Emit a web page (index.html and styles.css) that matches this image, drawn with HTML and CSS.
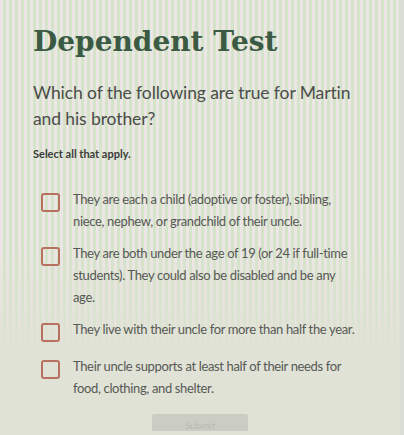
FILE: index.html
```html
<!DOCTYPE html>
<html lang="en">
<head>
  <meta charset="UTF-8">
  <meta name="viewport" content="width=device-width, initial-scale=1.0">
  <title>Dependent Test</title>
  <link rel="stylesheet" href="styles.css">
</head>
<body>
  <div class="quiz">
    <h1 class="quiz-title">Dependent Test</h1>
    <p class="quiz-question">Which of the following are true for Martin and his brother?</p>
    <p class="quiz-hint">Select all that apply.</p>
    <ul class="options">
      <li class="option"><span class="box"></span><span class="option-text">They are each a child (adoptive or foster), sibling, niece, nephew, or grandchild of their uncle.</span></li>
      <li class="option"><span class="box"></span><span class="option-text">They are both under the age of 19 (or 24 if full-time students). They could also be disabled and be any age.</span></li>
      <li class="option"><span class="box"></span><span class="option-text">They live with their uncle for more than half the year.</span></li>
      <li class="option option-last"><span class="box"></span><span class="option-text">Their uncle supports at least half of their needs for food, clothing, and shelter.</span></li>
    </ul>
    <div class="submit-row">
      <button class="submit-btn">Submit</button>
    </div>
  </div>
</body>
</html>
```

FILE: styles.css
```css
body {
  margin: 0;
  height: 435px;
  overflow: hidden;
  font-family: 'Lato', 'Noto Sans', sans-serif;
  background:
    linear-gradient(180deg, rgba(224,226,214,0) 0%, rgba(224,226,214,0) 55%, rgba(224,226,214,0.9) 80%, #e0e2d6 100%),
    repeating-linear-gradient(90deg, #ece6e4 0px, #ece6e4 3px, #d4e3c9 3px, #d4e3c9 6px);
  border-right: 4px solid #d9ddd6;
  box-sizing: border-box;
}
.quiz {
  padding: 20px 33px 0 33px;
}
.quiz-title {
  font-family: 'DejaVu Serif', serif;
  font-weight: bold;
  font-size: 28px;
  color: #3b5a43;
  margin: 0 0 16px 0;
  line-height: 44px;
}
.quiz-question {
  font-size: 17.5px;
  color: #4b4d4a;
  line-height: 26px;
  margin: 0 0 15px 0;
  letter-spacing: -0.1px;
}
.quiz-hint {
  font-size: 11px;
  font-weight: bold;
  color: #3a3c3a;
  margin: 0 0 31px 0;
}
.options {
  list-style: none;
  margin: 0;
  padding: 0 0 0 8px;
  display: flex;
  flex-direction: column;
  gap: 13px;
}
.option {
  display: flex;
  align-items: flex-start;
  gap: 13px;
}
.option-last {
  margin-top: 3px;
}
.box {
  flex: none;
  width: 15px;
  height: 15px;
  border: 2px solid #b8705f;
  border-radius: 3px;
  margin-top: 2px;
}
.option-text {
  max-width: 286px;
  font-size: 13px;
  line-height: 22px;
  color: #575955;
  margin-top: -3px;
  letter-spacing: -0.35px;
}
.submit-row {
  display: flex;
  justify-content: center;
  margin-top: 15px;
}
.submit-btn {
  width: 96px;
  height: 17px;
  border: none;
  border-radius: 2px 2px 0 0;
  background: #cbcdc4;
  color: #b9bbb3;
  font-family: 'Lato', sans-serif;
  font-size: 10px;
  line-height: 12px;
  padding: 5px 0 0 0;
}
```
